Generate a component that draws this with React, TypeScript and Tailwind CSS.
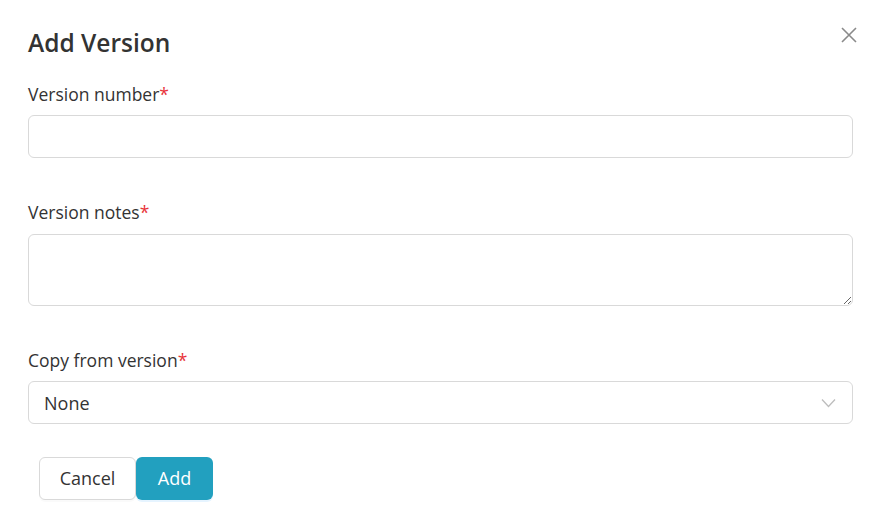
import React from "react";

const font = { fontFamily: '"Open Sans", "Noto Sans", sans-serif' };

function Label({ text }: { text: string }) {
  return (
    <div className="text-[17.5px] leading-[24px] text-[#333333]">
      {text}
      <span className="text-[#e8343a]">*</span>
    </div>
  );
}

export default function App() {
  return (
    <div className="w-[879px] h-[519px] bg-white relative" style={font}>
      <button className="absolute left-[838px] top-[24px] w-[22px] h-[22px] flex items-center justify-center text-[#8a8a8a]">
        <svg width="18" height="18" viewBox="0 0 18 18" fill="none" stroke="currentColor" strokeWidth="1.6">
          <path d="M2 2 L16 16 M16 2 L2 16" />
        </svg>
      </button>
      <div className="pl-[28px] pr-[26px] pt-[27px]">
        <h1 className="text-[24.5px] leading-[32px] font-semibold text-[#333333]">Add Version</h1>
        <div className="mt-[23px]">
          <Label text="Version number" />
          <input className="mt-[9px] block w-full h-[43px] rounded-[6px] border border-[#d9d9d9] px-[15px] text-[18px] outline-none" />
        </div>
        <div className="mt-[42px]">
          <Label text="Version notes" />
          <textarea className="mt-[10px] block w-full h-[72px] rounded-[6px] border border-[#d9d9d9] px-[15px] py-[8px] text-[18px] outline-none resize-y" />
        </div>
        <div className="mt-[42px]">
          <Label text="Copy from version" />
          <div className="mt-[9px] w-full h-[43px] rounded-[6px] border border-[#d9d9d9] pl-[15px] pr-[16px] flex items-center justify-between">
            <span className="text-[18px] leading-[24px] pt-[1px] text-[#333333]">None</span>
            <svg width="15" height="10" viewBox="0 0 15 10" fill="none" stroke="#bdbdbd" strokeWidth="1.3">
              <path d="M1 1.5 L7.5 8.5 L14 1.5" />
            </svg>
          </div>
        </div>
        <div className="mt-[33px] pl-[11px] flex">
          <button className="h-[43px] w-[97px] rounded-[6px] border border-[#d9d9d9] bg-white text-[18px] text-[#333333] shadow-[0_2px_0_rgba(0,0,0,0.02)]">
            Cancel
          </button>
          <button className="h-[43px] w-[77px] rounded-[6px] bg-[#22a0bf] text-[18px] text-white shadow-[0_2px_0_rgba(5,145,255,0.1)]">
            Add
          </button>
        </div>
      </div>
    </div>
  );
}
